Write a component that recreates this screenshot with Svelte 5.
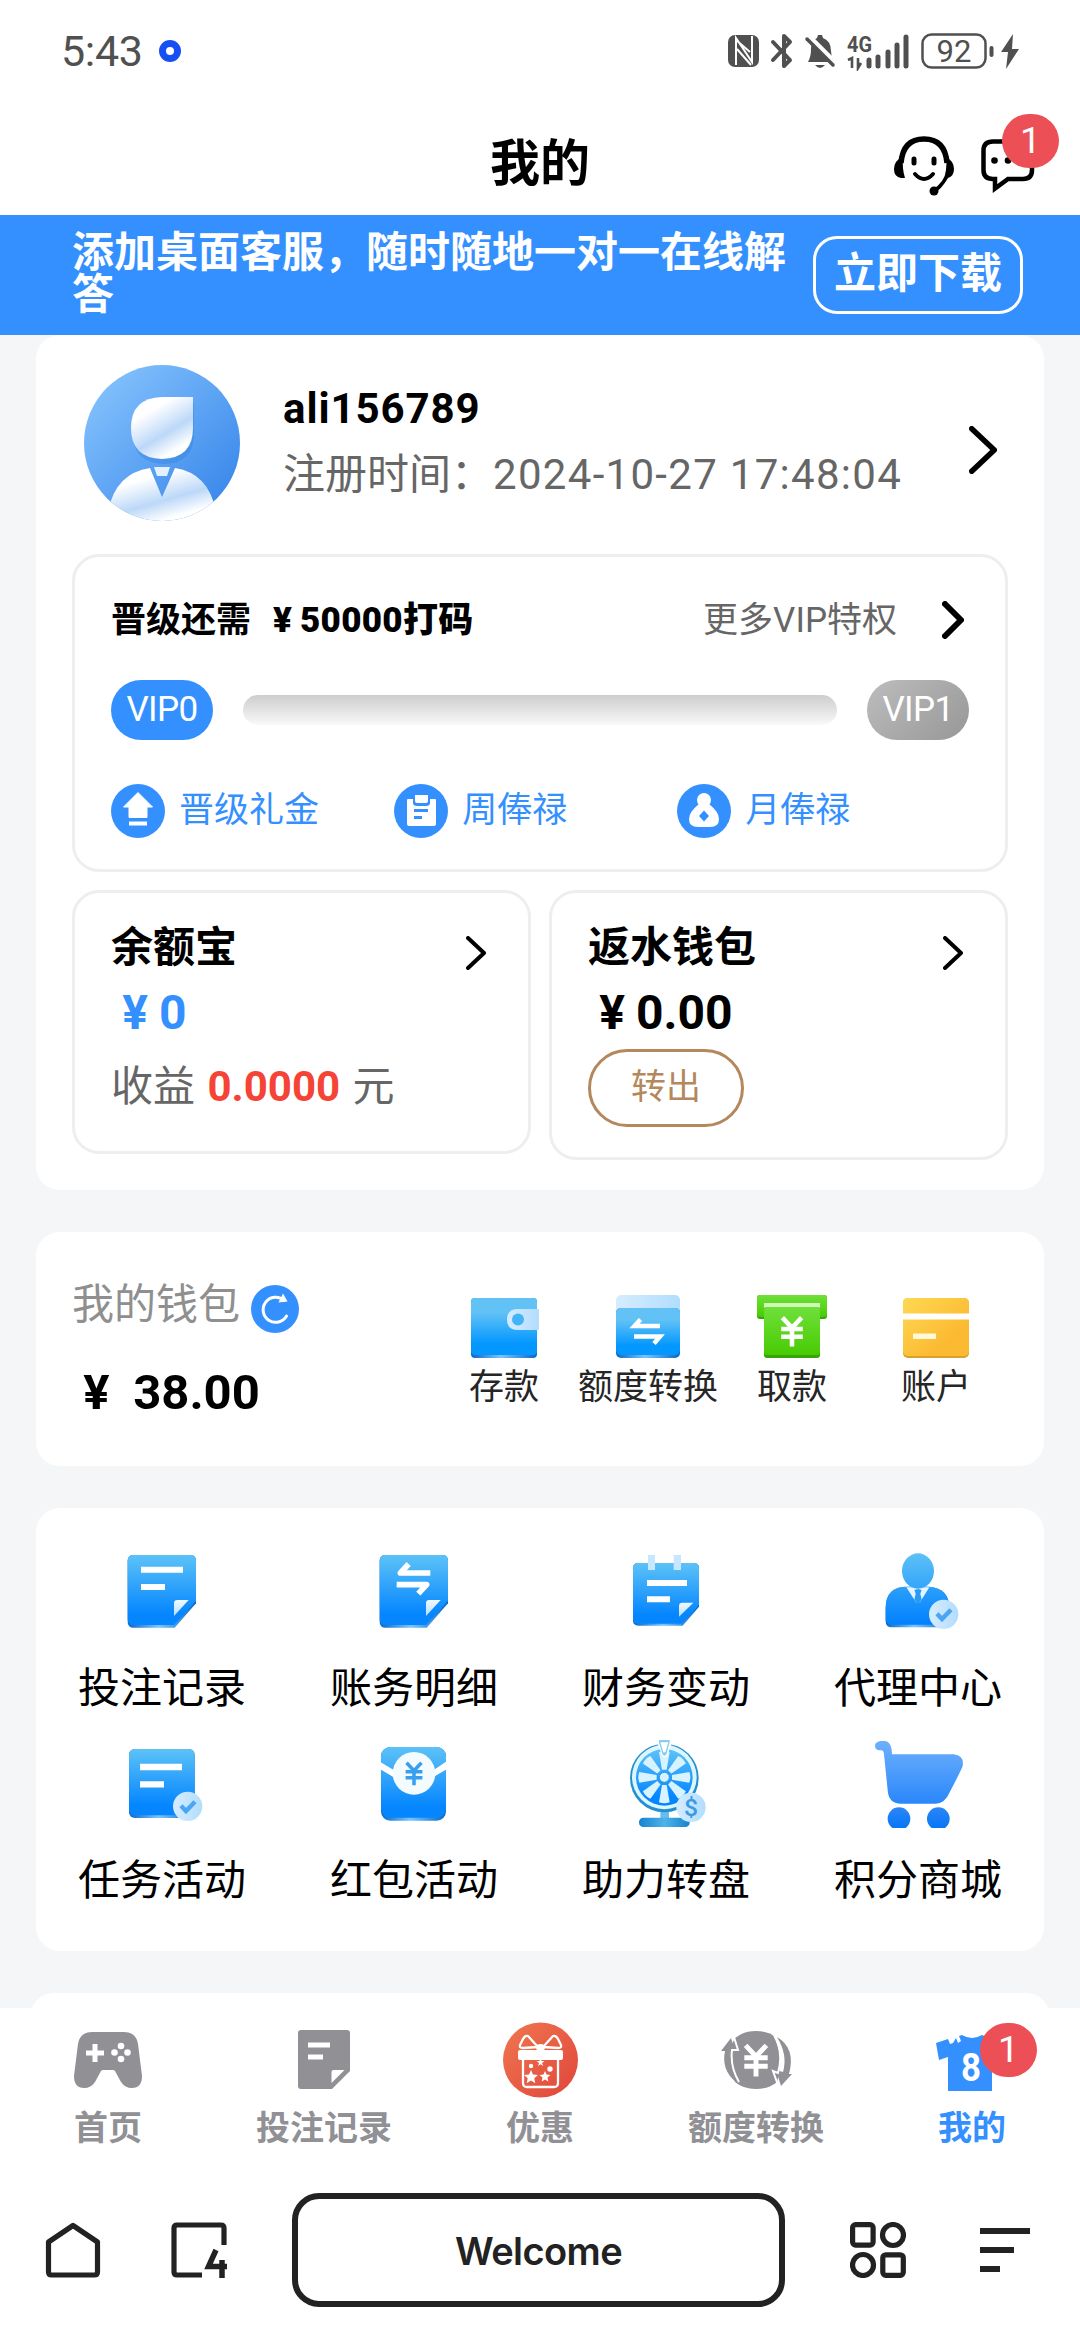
<script>
	const perks = [
		{ icon: 'up', label: '晋级礼金' },
		{ icon: 'week', label: '周俸禄' },
		{ icon: 'month', label: '月俸禄' }
	];

	const walletActions = [
		{ icon: 'deposit', label: '存款' },
		{ icon: 'convert', label: '额度转换' },
		{ icon: 'withdraw', label: '取款' },
		{ icon: 'account', label: '账户' }
	];

	const services = [
		{ icon: 'bets', label: '投注记录' },
		{ icon: 'bills', label: '账务明细' },
		{ icon: 'finance', label: '财务变动' },
		{ icon: 'agent', label: '代理中心' },
		{ icon: 'task', label: '任务活动' },
		{ icon: 'packet', label: '红包活动' },
		{ icon: 'wheel', label: '助力转盘' },
		{ icon: 'cart', label: '积分商城' }
	];

	const tabs = [
		{ icon: 'home', label: '首页' },
		{ icon: 'note', label: '投注记录' },
		{ icon: 'gift', label: '优惠' },
		{ icon: 'exchange', label: '额度转换' },
		{ icon: 'shirt', label: '我的', badge: 1 }
	];

	const spokes = [0, 45, 90, 135, 180, 225, 270, 315];
	let active = $state('shirt');
</script>

{#snippet chevron(w, h, sw)}
	<svg class="chevron" width={w} height={h} viewBox="0 0 {w} {h}" fill="none" stroke="#000" stroke-width={sw} stroke-linecap="round" stroke-linejoin="round">
		<path d="M{sw / 2} {sw / 2} L{w - sw / 2} {h / 2} L{sw / 2} {h - sw / 2}" />
	</svg>
{/snippet}

{#snippet yen(x, y, s, color)}
	<g transform="translate({x} {y}) scale({s})" fill="none" stroke={color} stroke-width="3.800">
		<path d="M-8 -12 L0 -3.5 L8 -12 M-9 -2.5 H9 M-9 4 H9 M0 -4 V12" />
	</g>
{/snippet}

{#snippet perkIcon(name)}
	<svg width="54" height="54" viewBox="0 0 54 54">
		<circle cx="27" cy="27" r="27" fill="#3490ff" />
		{#if name === 'up'}
			<path d="M27 8.500L41.500 23H36v10.500H18V23h-5.500z" fill="#fff" stroke="#fff" stroke-linejoin="round" />
			<path d="M18 39.500h18" stroke="#fff" stroke-width="4" />
		{:else if name === 'week'}
			<path d="M14 15h5v4q0 3 4 3h9q4 0 4-3v-4h5q1 0 1 1v24q0 2-2 2H15q-2 0-2-2V16q0-1 1-1z" fill="#fff" />
			<path d="M21 11h13v6q0 2-2 2h-9q-2 0-2-2z" fill="#fff" />
			<path d="M20 26.500h14M20 33.500h8" stroke="#3490ff" stroke-width="3" />
		{:else}
			<circle cx="27" cy="16" r="7" fill="#fff" />
			<path d="M22 20h10q10 8 10 15 0 8-9 8H21q-9 0-9-8 0-7 10-15z" fill="#fff" />
			<path d="M27 26.500l5 5.500-5 5.500-5-5.500z" fill="#3490ff" />
		{/if}
	</svg>
{/snippet}

{#snippet walletIcon(name)}
	<svg width="72" height="72" viewBox="0 0 72 72">
		{#if name === 'deposit'}
			<rect x="3" y="6" width="66" height="60" rx="4" fill="url(#edge)" />
			<rect x="3" y="6" width="66" height="57" rx="4" fill="url(#wallet)" />
			<path d="M71 17H50q-11 0-11 10.500T50 38h21z" fill="url(#pale)" />
			<circle cx="50" cy="27.500" r="6" fill="#43b3fa" />
		{:else if name === 'convert'}
			<rect x="4" y="3" width="64" height="30" rx="5" fill="url(#pale)" />
			<rect x="4" y="16" width="64" height="50" rx="5" fill="url(#edge)" />
			<rect x="4" y="16" width="64" height="47" rx="5" fill="url(#wallet)" />
			<path d="M48 34H22.500L28.500 27.500M22 44.500h26L42 51.500" fill="none" stroke="#fff" stroke-width="4.500" />
		{:else if name === 'withdraw'}
			<rect x="1" y="3" width="70" height="24" rx="3" fill="#37a50a" />
			<rect x="1" y="3" width="70" height="22" rx="3" fill="url(#green)" />
			<path d="M8 11h56v5H8z" fill="#cdfbb6" />
			<rect x="8" y="15" width="56" height="51" rx="3" fill="#37a50a" />
			<rect x="8" y="15" width="56" height="48" rx="3" fill="url(#green)" />
			{@render yen(36, 40, 1.2, '#fff')}
		{:else}
			<rect x="3" y="6" width="66" height="60" rx="5" fill="#dc9f2b" />
			<rect x="3" y="6" width="66" height="58" rx="5" fill="url(#gold)" />
			<path d="M3 21.500h66v6H3z" fill="#fff" />
			<path d="M13 41.500h23v5.500H13z" fill="#fff8d9" />
		{/if}
	</svg>
{/snippet}

{#snippet check(x, y)}
	<circle cx={x} cy={y} r="44" fill="url(#pale)" />
	<path d="M{x - 20} {y - 2} l15 16 l27 -28" fill="none" stroke="#4aa6f2" stroke-width="13" />
{/snippet}

{#snippet foldedSheet()}
	<path d="M50 27h170q17 0 17 17v128l-64 73H50q-18 0-18-18V44q0-17 18-17z" fill="url(#edge)" />
	<path d="M50 27h170q17 0 17 17v120l-66 73H50q-18 0-18-18V44q0-17 18-17z" fill="url(#sheet)" />
	<path d="M171 210v-38q0-10 10-10h34z" fill="url(#paleV)" />
{/snippet}

{#snippet serviceIcon(name)}
	<svg width="90" height="90" viewBox="0 0 270 270">
		{#if name === 'bets'}
			{@render foldedSheet()}
			<path d="M72 71h126M72 123h72" stroke="#fff" stroke-width="18" />
		{:else if name === 'bills'}
			{@render foldedSheet()}
			<path d="M184 81H94L119 54M83 116h90L148 143" fill="none" stroke="#fff" stroke-width="17" stroke-linejoin="round" />
		{:else if name === 'finance'}
			<path d="M52 51h166q16 0 16 16v115l-49 57H52q-16 0-16-16V67q0-16 16-16z" fill="url(#edge)" />
			<path d="M52 51h166q16 0 16 16v109l-50 57H52q-16 0-16-16V67q0-16 16-16z" fill="url(#sheet)" />
			<path d="M81 27h21v45H81zM158 27h22v45h-22z" fill="#c6e7ff" />
			<path d="M78 111h120M78 160h69" stroke="#fff" stroke-width="18" />
			<path d="M174 212v-32q0-10 10-10h33z" fill="url(#paleV)" />
		{:else if name === 'agent'}
			<path d="M56 244q-18 0-18-18v-40q0-64 64-64h66q61 4 61 66v56z" fill="url(#edge)" />
			<path d="M56 236q-18 0-18-18v-32q0-64 64-64h66q61 4 61 66v48z" fill="url(#suit)" />
			<path d="M100 124l30 46 5-26-6-14h12l-6 14 5 26 29-46z" fill="#e5f5ff" />
			<path d="M124 131h22l-4 12 4 18-11 14-11-14 4-18z" fill="#299bf6" />
			<ellipse cx="135" cy="75" rx="48" ry="53" fill="url(#head)" />
			{@render check(212, 205)}
		{:else if name === 'task'}
			<rect x="36" y="33" width="197" height="207" rx="17" fill="url(#edge)" />
			<rect x="36" y="33" width="197" height="199" rx="17" fill="url(#sheet)" />
			<path d="M69 87h126M69 139h72" stroke="#fff" stroke-width="19" />
			{@render check(212, 205)}
		{:else if name === 'packet'}
			<rect x="36" y="27" width="195" height="221" rx="28" fill="url(#edge)" />
			<rect x="36" y="27" width="195" height="212" rx="28" fill="url(#sheet)" />
			<path d="M34 72l54 32 94 0 51-34v24l-55 32H88L34 94z" fill="#fff" />
			<circle cx="135" cy="106" r="64" fill="#f4fbff" />
			{@render yen(135, 108, 2.8, '#389eef')}
		{:else if name === 'wheel'}
			<path d="M118 220h26v24h-26z" fill="#68bdf0" />
			<rect x="54" y="239" width="152" height="28" rx="13" fill="url(#base)" />
			<circle cx="130" cy="120" r="103" fill="#258ecf" />
			<circle cx="130" cy="117" r="97" fill="#dcf6ff" />
			<circle cx="130" cy="118" r="85" fill="url(#sheet)" />
			{#each spokes as angle}
				<path transform="rotate({angle} 130 118)" d="M123 95L114 43q16-6 32 0l-9 52z" fill="#d7f3ff" />
			{/each}
			<circle cx="130" cy="118" r="15" fill="#d4f3ff" stroke="#2b94e4" stroke-width="3" />
			<path d="M110 16q0-10 6-10h30q7 0 6 10l-13 37q-8 10-16 0z" fill="#fff" />
			<path d="M114 6h32v7l-10 37q-5 6-11 0L114 14z" fill="#8acdf0" />
			<path d="M118 13h24l-9 30h-6z" fill="#fff" />
			<circle cx="210" cy="208" r="44" fill="url(#pale)" />
			<text x="210" y="234" text-anchor="middle" font-size="74" font-weight="500" fill="#399be8">$</text>
		{:else}
			<path d="M22 9h13q21 1 22 40h185q32 3 27 35-2 8-39 79-14 34-42 34H84q-38 0-40-41L33 49q-1-12-8-12h-7q-12-3-12-14T22 9z" fill="url(#cart)" />
			<circle cx="78" cy="242" r="34" fill="url(#dot)" />
			<circle cx="196" cy="242" r="34" fill="url(#dot)" />
		{/if}
	</svg>
{/snippet}

{#snippet tabIcon(name)}
	<svg width="80" height="80" viewBox="0 0 80 80">
		{#if name === 'home'}
			<path d="M24 12h32q12 0 14 12l4 32q0 12-10 12-7 0-11-6l-6-11q-1-1-2-1H35q-1 0-2 1l-6 11q-4 6-11 6-10 0-10-12l4-32q2-12 14-12z" fill="#909095" />
			<path d="M18 33h18M27 24v18" stroke="#fff" stroke-width="5" />
			<g fill="#fff">
				<circle cx="53" cy="26" r="3.300" /><circle cx="53" cy="39" r="3.300" />
				<circle cx="46.500" cy="32.500" r="3.300" /><circle cx="59.500" cy="32.500" r="3.300" />
			</g>
		{:else if name === 'note'}
			<path d="M17 10h46q3 0 3 3v38L48 69H17q-3 0-3-3V13q0-3 3-3z" fill="#909095" />
			<path d="M24 25h22M24 37h15" stroke="#fff" stroke-width="5" />
			<path d="M47.500 63V52q0-2 2-2h11z" fill="#fff" />
		{:else if name === 'gift'}
			<circle cx="40.500" cy="40" r="37.500" fill="url(#red)" />
			<g fill="none" stroke="#fff" stroke-width="2.300" stroke-linejoin="round">
				<path d="M38 27L28 16q-3-1-5 3l-3 6q-1 3 3 3zM43 27l10-11q3-1 5 3l3 6q1 3-3 3z" />
				<path d="M23 39v24q0 4 4 4h27q4 0 4-4V39" />
			</g>
			<ellipse cx="40.500" cy="27.500" rx="4.500" ry="3.500" fill="#fff" />
			<rect x="18" y="30" width="45" height="10" rx="2" fill="#fff" />
			<g fill="#fff">
				<path d="M31 50l2 4.500 5 .5-3.700 3.200 1 5-4.300-2.700-4.300 2.700 1-5L24 55l5-.5zM45 51l1.500 3.500 4 .5-3 2.500.8 4-3.300-2-3.300 2 .8-4-3-2.500 4-.5z" />
				<circle cx="31" cy="46" r="2.200" /><circle cx="50" cy="49" r="2.700" />
				<path d="M40.500 38l1 3h3l-2.400 2 1 3-2.600-1.800L38 46l1-3-2.500-2h3z" />
			</g>
		{:else if name === 'exchange'}
			<path d="M40 11q11 0 18 5 11 23 3 46-8 7-21 7t-21-7q-12-23 0-44 8-7 21-7z" fill="#909095" />
			<g fill="#909095">
				<path d="M15 18l4 13h-5q-2 15 6 31Q5 50 9 31H5z" />
				<path d="M61 17q19 11 12 37h3L65 66 60 50l7 2q5-17-6-35z" />
			</g>
			<path d="M18 17l4 13h-6q-2 17 7 32M58 15q10 18 4 38l-5-2 6 17" fill="none" stroke="#fff" stroke-width="2" />
			{@render yen(40, 41, 1.3, '#fff')}
		{:else}
			<path d="M24 18l2 5 3-2-2-5 3-1q10 6 20 0l12 5 10 17-9 8-3-4v30H16V37l-9 3-3-17 12-4 2 5 3-1z" fill="#3490ff" />
			<text x="39" y="60.500" text-anchor="middle" font-size="39" font-weight="700" textLength="20" lengthAdjust="spacingAndGlyphs" fill="#fff">8</text>
		{/if}
	</svg>
{/snippet}

<svg class="defs" aria-hidden="true">
	<defs>
		<linearGradient id="sheet" x2="0" y2="1"><stop offset="0" stop-color="#5dc2f7" /><stop offset=".85" stop-color="#0586ff" /></linearGradient>
		<linearGradient id="suit" x2="0" y2="1"><stop offset="0" stop-color="#2ba0fb" /><stop offset="1" stop-color="#0180ff" /></linearGradient>
		<linearGradient id="head" x2="0" y2="1"><stop offset="0" stop-color="#5dc1f7" /><stop offset="1" stop-color="#35a5fa" /></linearGradient>
		<linearGradient id="wallet" x2="0" y2="1"><stop offset=".25" stop-color="#62c2f6" /><stop offset=".8" stop-color="#0397ff" /></linearGradient>
		<linearGradient id="green" x2="0" y2="1"><stop offset="0" stop-color="#6fe03a" /><stop offset="1" stop-color="#48cb03" /></linearGradient>
		<linearGradient id="gold" y2="1"><stop offset="0" stop-color="#ffd953" /><stop offset=".7" stop-color="#fcba33" /></linearGradient>
		<linearGradient id="pale"><stop offset="0" stop-color="#d6ecff" /><stop offset="1" stop-color="#b2ddfd" /></linearGradient>
		<linearGradient id="paleV" x2="0" y2="1"><stop offset="0" stop-color="#f2faff" /><stop offset="1" stop-color="#b8dfff" /></linearGradient>
		<linearGradient id="edge"><stop offset="0" stop-color="#0768c4" /><stop offset=".45" stop-color="#79c5ff" /><stop offset="1" stop-color="#0768c4" /></linearGradient>
		<linearGradient id="base"><stop offset="0" stop-color="#1583d0" /><stop offset=".5" stop-color="#4fb2e8" /><stop offset="1" stop-color="#1583d0" /></linearGradient>
		<linearGradient id="cart" x2="0" y2="1"><stop offset="0" stop-color="#6fb0fd" /><stop offset="1" stop-color="#2a87fb" /></linearGradient>
		<linearGradient id="dot" x2="0" y2="1"><stop offset="0" stop-color="#2c86f7" /><stop offset="1" stop-color="#0275f5" /></linearGradient>
		<linearGradient id="red" y2="1"><stop offset="0" stop-color="#f0774f" /><stop offset="1" stop-color="#e0453b" /></linearGradient>
		<linearGradient id="face" y2="1"><stop offset="0" stop-color="#8cc8ff" /><stop offset="1" stop-color="#2f80e8" /></linearGradient>
		<linearGradient id="shine" x2=".6" y2="1"><stop offset=".3" stop-color="#fff" /><stop offset=".68" stop-color="#bcd8f8" /><stop offset=".95" stop-color="#fff" /></linearGradient>
	</defs>
</svg>

<div class="page" lang="zh-CN">
	<div class="status">
		<span class="clock">5:43</span>
		<span class="ring"></span>
		<svg class="tray" width="294" height="40" viewBox="0 0 294 40" fill="#505050">
			<!-- nfc -->
			<rect x="0" y="4" width="31" height="32" rx="7" />
			<path d="M8 34V7l16 24V5M8 9l14 12M9 18l14 16" fill="none" stroke="#fff" stroke-width="2" />
			<!-- bluetooth -->
			<path d="M45 11l17 18-6 6V5l6 6-17 18" fill="none" stroke="#505050" stroke-width="4" stroke-linejoin="round" stroke-linecap="round" />
			<!-- muted bell -->
			<path d="M80 31q3-5 3-13 0-9 6-11l1-3h4l1 3q8 3 8 13 0 6 3 11zM87 34h10q-5 6-10 0z" />
			<path d="M80 5l26 26" stroke="#fff" stroke-width="6" />
			<path d="M79 8l26 26" stroke="#505050" stroke-width="3.500" stroke-linecap="round" />
			<!-- cell signal -->
			<text x="119" y="21" font-size="22" font-weight="700" textLength="25" lengthAdjust="spacingAndGlyphs">4G</text>
			<path d="M120 29l4-2v10M130 27v10l3-5" fill="none" stroke="#505050" stroke-width="2.600" />
			<path d="M141 29v6M150 26v9M160 21v14M169 14v21M178 6v29" stroke="#505050" stroke-width="5" stroke-linecap="round" />
			<!-- battery -->
			<rect x="194.500" y="3.500" width="63" height="33" rx="9" fill="none" stroke="#505050" stroke-width="2.500" />
			<text x="226" y="31" text-anchor="middle" font-size="31">92</text>
			<rect x="261.500" y="15" width="4" height="11" rx="2" />
			<path d="M285 3l-12 18h7l-2 17 13-20h-7z" />
		</svg>
	</div>

	<header>
		<h1>我的</h1>
		<div class="header-icons">
			<svg width="60" height="60" viewBox="0 0 60 60">
				<path d="M7 27Q9 3 30 3t23 24" fill="none" stroke="#000" stroke-width="5.500" />
				<path d="M8 21q-8 4-8 12 0 8 7 9h4V42q-3-9-2-21zM52 21q8 4 8 12 0 7-6 9-7 12-14 15l-2-3q13-8 14-20 1-7 0-13z" />
				<circle cx="40" cy="55" r="4.500" />
				<path d="M20 23v4M40 23v4" stroke="#000" stroke-width="5" stroke-linecap="round" />
				<path d="M21 38q9 10 18 0" fill="none" stroke="#000" stroke-width="4" stroke-linecap="round" />
			</svg>
			<div class="message">
				<svg width="54" height="54" viewBox="0 0 54 54">
					<path d="M12 2.500h30q9 0 9 9V31q0 9-9 9H27L14 49.500V40h-2q-9.500 0-9.500-9V11.500q0-9 9.500-9z" fill="none" stroke="#000" stroke-width="4.500" />
					<circle cx="13.500" cy="21.500" r="3.300" /><circle cx="27" cy="21.500" r="3.300" /><circle cx="40" cy="21.500" r="3.300" />
				</svg>
				<span class="badge">1</span>
			</div>
		</div>
	</header>

	<div class="banner">
		<p>添加桌面客服，随时随地一对一在线解答</p>
		<button>立即下载</button>
	</div>

	<main>
		<section class="card profile-card">
			<div class="profile">
				<svg width="156" height="156" viewBox="0 0 156 156">
					<clipPath id="round"><circle cx="78" cy="78" r="78" /></clipPath>
					<g clip-path="url(#round)">
						<rect width="156" height="156" fill="url(#face)" />
						<path d="M78 35h30v31q0 29-30 30-31-1-31-30 0-29 31-31z" fill="#2676da" opacity=".3" transform="translate(2 3)" />
						<path d="M78 32h31v31q0 30-31 31-31-1-31-31 0-30 31-31z" fill="url(#shine)" />
						<path d="M70 102h16l-3 9H73z" fill="#e3f0ff" />
						<path d="M66 103l12 29 13-29q38 6 42 53H23q4-47 43-53z" fill="url(#shine)" />
					</g>
				</svg>
				<div class="who">
					<strong>ali156789</strong>
					<span>注册时间：<i>2024-10-27 17:48:04</i></span>
				</div>
				{@render chevron(28, 48, 5.5)}
			</div>

			<div class="panel vip">
				<div class="vip-head">
					<strong>晋级还需<b><u class="yen">¥</u>50000打码</b></strong>
					<span>更多VIP特权</span>
					{@render chevron(22, 38, 6)}
				</div>
				<div class="vip-level">
					<span class="pill">VIP0</span>
					<div class="track"></div>
					<span class="pill next">VIP1</span>
				</div>
				<div class="perks">
					{#each perks as perk}
						<div class="perk">{@render perkIcon(perk.icon)}<span>{perk.label}</span></div>
					{/each}
				</div>
			</div>

			<div class="purses">
				<div class="panel purse">
					<div class="purse-head"><strong>余额宝</strong>{@render chevron(20, 34, 4)}</div>
					<div class="amount blue"><u class="yen">¥</u>0</div>
					<div class="income">收益 <b>0.0000</b> 元</div>
				</div>
				<div class="panel purse">
					<div class="purse-head"><strong>返水钱包</strong>{@render chevron(20, 34, 4)}</div>
					<div class="amount"><u class="yen">¥</u>0.00</div>
					<button class="out">转出</button>
				</div>
			</div>
		</section>

		<section class="card wallet">
			<div class="balance">
				<div class="balance-title">
					<span>我的钱包</span>
					<svg width="48" height="48" viewBox="0 0 48 48">
						<circle cx="24" cy="24" r="24" fill="#3490ff" />
						<path d="M33 15.500A12.500 12.500 0 1 0 35.500 31" fill="none" stroke="#fff" stroke-width="3" stroke-linecap="round" />
						<path d="M32 8.500l4.500 8-9 1z" fill="#fff" />
					</svg>
				</div>
				<div class="balance-sum"><u class="yen">¥</u> 38.00</div>
			</div>
			<div class="wallet-actions">
				{#each walletActions as action}
					<div class="wallet-action">{@render walletIcon(action.icon)}<span>{action.label}</span></div>
				{/each}
			</div>
		</section>

		<section class="card services">
			{#each services as service}
				<div class="service">{@render serviceIcon(service.icon)}<span>{service.label}</span></div>
			{/each}
		</section>

		<section class="card more"></section>
	</main>

	<nav>
		{#each tabs as tab}
			<button class="tab" class:active={active === tab.icon} onclick={() => (active = tab.icon)}>
				{@render tabIcon(tab.icon)}
				<span>{tab.label}</span>
				{#if tab.badge}<em class="badge">{tab.badge}</em>{/if}
			</button>
		{/each}
	</nav>

	<footer>
		<svg width="56" height="56" viewBox="0 0 56 56" fill="none" stroke="#222" stroke-width="5.200" stroke-linejoin="round">
			<path d="M28 3.500L52.500 20v30q0 3-3 3H6.500q-3 0-3-3V20z" />
		</svg>
		<svg class="pages" width="56" height="56" viewBox="0 0 56 56">
			<path d="M31 53H6q-3 0-3-3V6q0-3 3-3h44q3 0 3 3v17" fill="none" stroke="#222" stroke-width="5.200" />
			<path d="M45 28L37.500 44.500H56M51 38v18" fill="none" stroke="#222" stroke-width="5.500" />
		</svg>
		<div class="address">Welcome</div>
		<svg width="56" height="56" viewBox="0 0 56 56" fill="none" stroke="#222" stroke-width="5.200">
			<rect x="2.600" y="2.600" width="20.500" height="20.500" rx="3" />
			<circle cx="43" cy="13" r="10.500" />
			<circle cx="13" cy="43" r="10.500" />
			<rect x="32.800" y="32.800" width="20.500" height="20.500" rx="3" />
		</svg>
		<svg class="menu" width="50" height="44" viewBox="0 0 50 44" stroke="#222" stroke-width="6">
			<path d="M0 3h50M0 22h34M0 41h20" />
		</svg>
	</footer>
</div>

<style>
	:global(body) { margin: 0; background: #fff; }

	.page {
		width: 1080px; height: 2340px; overflow: hidden;
		display: flex; flex-direction: column;
		background: #fff; color: #000;
		font-family: Roboto, "Noto Sans CJK SC", sans-serif;
	}
	.defs { width: 0; height: 0; position: absolute; }
	svg { display: block; flex-shrink: 0; }
	button { font-family: inherit; background: none; border: 0; padding: 0; margin: 0; }
	/* currency sign takes a full-width cell */
	.yen { display: inline-block; width: 1em; text-align: center; text-decoration: none; }

	.status {
		height: 102px; padding: 0 58px 0 61px; box-sizing: border-box; flex-shrink: 0;
		display: flex; align-items: center;
	}
	.clock { font-size: 43px; letter-spacing: -0.3px; color: #505050; }
	.ring {
		width: 8px; height: 8px; margin: -1px 0 0 16px;
		border: 7px solid #1650f5; border-radius: 50%;
	}
	.tray { margin-left: auto; }

	header {
		height: 113px; padding-top: 10px; box-sizing: border-box; flex-shrink: 0;
		display: grid; grid-template-columns: 1fr auto 1fr; align-items: center;
	}
	h1 { grid-column: 2; margin: 0; font-size: 50px; line-height: 60px; font-weight: 700; }
	.header-icons {
		justify-self: end; padding: 5px 45px 0 0;
		display: flex; align-items: center; gap: 27px;
	}
	.message { position: relative; }
	.badge {
		position: absolute; width: 57px; height: 54px; border-radius: 28px;
		background: #ec5056; color: #fff; text-align: center;
		font-size: 37px; line-height: 54px; font-style: normal; font-weight: 400;
	}
	.message .badge { left: 21px; top: -25px; }

	.banner {
		height: 120px; padding: 0 57px 0 72px; box-sizing: border-box; flex-shrink: 0;
		background: #3490ff; color: #fff;
		display: flex; align-items: center; justify-content: space-between;
	}
	.banner p { width: 716px; margin: -2px 0 0; font-size: 42px; line-height: 42px; font-weight: 700; }
	.banner button {
		width: 210px; height: 78px; padding-bottom: 2px; border: 3px solid #fff; border-radius: 24px;
		color: #fff; font-size: 42px; font-weight: 700; line-height: 66px;
	}

	main { flex: 1; min-height: 0; overflow: hidden; background: #f4f6f8; }
	.card { margin: 0 36px 42px; background: #fff; border-radius: 24px; box-sizing: border-box; }
	.profile-card { padding: 30px 36px; }
	.profile { display: flex; align-items: center; padding: 0 11px 0 12px; }
	.who { flex: 1; margin: 4px 0 0 43px; display: flex; flex-direction: column; }
	.who strong { font-size: 42px; line-height: 60px; letter-spacing: 0.9px; }
	.who span { font-size: 42px; line-height: 72px; color: #666; white-space: nowrap; }
	.who i { font-style: normal; letter-spacing: 1.3px; }
	.profile .chevron { margin-top: 13px; }

	.panel { border: 3px solid #eee; border-radius: 27px; box-sizing: border-box; padding: 0 36px; }
	.vip { height: 318px; margin-top: 33px; padding-top: 40px; }
	.vip-head { display: flex; align-items: center; height: 48px; line-height: 48px; font-size: 35px; padding-right: 5px; }
	.vip-head strong { flex: 1; }
	.vip-head b { margin-left: 14px; letter-spacing: 0.3px; }
	.vip-head span { color: #666; margin-right: 45px; }
	.vip-head .chevron { margin-top: -2px; }
	.vip-level { display: flex; align-items: center; gap: 30px; margin-top: 35px; }
	.pill {
		width: 102px; height: 60px; line-height: 60px; border-radius: 30px;
		background: #3490ff; color: #fff; text-align: center; font-size: 35px; letter-spacing: -0.6px;
	}
	.pill.next { background: linear-gradient(135deg, #bdbdbd, #979797); }
	.track { flex: 1; height: 30px; border-radius: 15px; background: linear-gradient(#cdcdcd, #f9f9f9); }
	.perks { display: flex; margin-top: 43px; }
	.perk { flex: 0 0 33%; display: flex; align-items: center; gap: 14px; font-size: 35px; line-height: 54px; color: #3490ff; }
	.perk span { margin-top: 1px; }

	.purses { display: flex; align-items: flex-start; gap: 18px; margin-top: 18px; }
	.purse { flex: 1; height: 264px; padding-top: 30px; }
	.purse + .purse { height: 270px; }
	.purse-head { display: flex; justify-content: space-between; align-items: center; height: 48px; line-height: 48px; font-size: 42px; padding-right: 6px; }
	.purse-head strong { margin-top: 2px; }
	.purse-head .chevron { margin-top: 12px; }
	.amount { height: 60px; line-height: 60px; margin-top: 12px; font-size: 48px; font-weight: 700; }
	.amount.blue { color: #3490ff; }
	.income { height: 60px; line-height: 60px; margin-top: 14px; font-size: 42px; color: #666; }
	.income b { color: #f54336; margin: 0 2px; }
	.out {
		display: block; width: 156px; height: 78px; margin-top: 6px; padding-bottom: 1px;
		border: 3px solid #b4875c; border-radius: 39px; color: #b4875c; font-size: 35px; line-height: 60px;
	}

	.wallet { height: 234px; padding: 0 36px; display: flex; }
	.balance { flex: 1; }
	.balance-title { display: flex; align-items: center; height: 60px; margin-top: 41px; font-size: 42px; line-height: 60px; color: #8f8f8f; gap: 11px; }
	.balance-title span { margin-top: 3px; }
	.balance-title svg { margin-top: 12px; }
	.balance-sum { margin-top: 30px; font-size: 49px; line-height: 60px; font-weight: 700; white-space: pre; }
	.wallet-actions { display: flex; padding-top: 60px; }
	.wallet-action {
		width: 144px; display: flex; flex-direction: column; align-items: center;
		font-size: 35px; line-height: 48px; color: #262626; white-space: nowrap;
	}

	.services { height: 443px; padding-top: 38px; display: grid; grid-template-columns: repeat(4, 1fr); align-content: start; row-gap: 25px; }
	.service { display: flex; flex-direction: column; align-items: center; gap: 29px; font-size: 42px; line-height: 48px; }
	.more { height: 200px; margin: 0 30px; }

	nav { height: 162px; padding-top: 12px; box-sizing: border-box; flex-shrink: 0; display: flex; }
	.tab {
		flex: 1; position: relative; color: #909095;
		display: flex; flex-direction: column; align-items: center;
		font-size: 34px; line-height: 48px; font-weight: 700;
	}
	.tab span { margin-top: 4px; }
	.tab.active { color: #3490ff; }
	.tab .badge { left: 116px; top: 3px; }

	footer { height: 170px; padding: 0 50px 10px 45px; box-sizing: border-box; flex-shrink: 0; display: flex; align-items: center; }
	.pages { margin-left: 70px; }
	.address {
		width: 493px; height: 114px; margin: 0 65px; box-sizing: border-box;
		border: 6px solid #222; border-radius: 27px;
		font: 600 38px/104px Inter, sans-serif; letter-spacing: -0.6px; color: #222; text-align: center;
	}
	.menu { margin-left: 74px; }
</style>
